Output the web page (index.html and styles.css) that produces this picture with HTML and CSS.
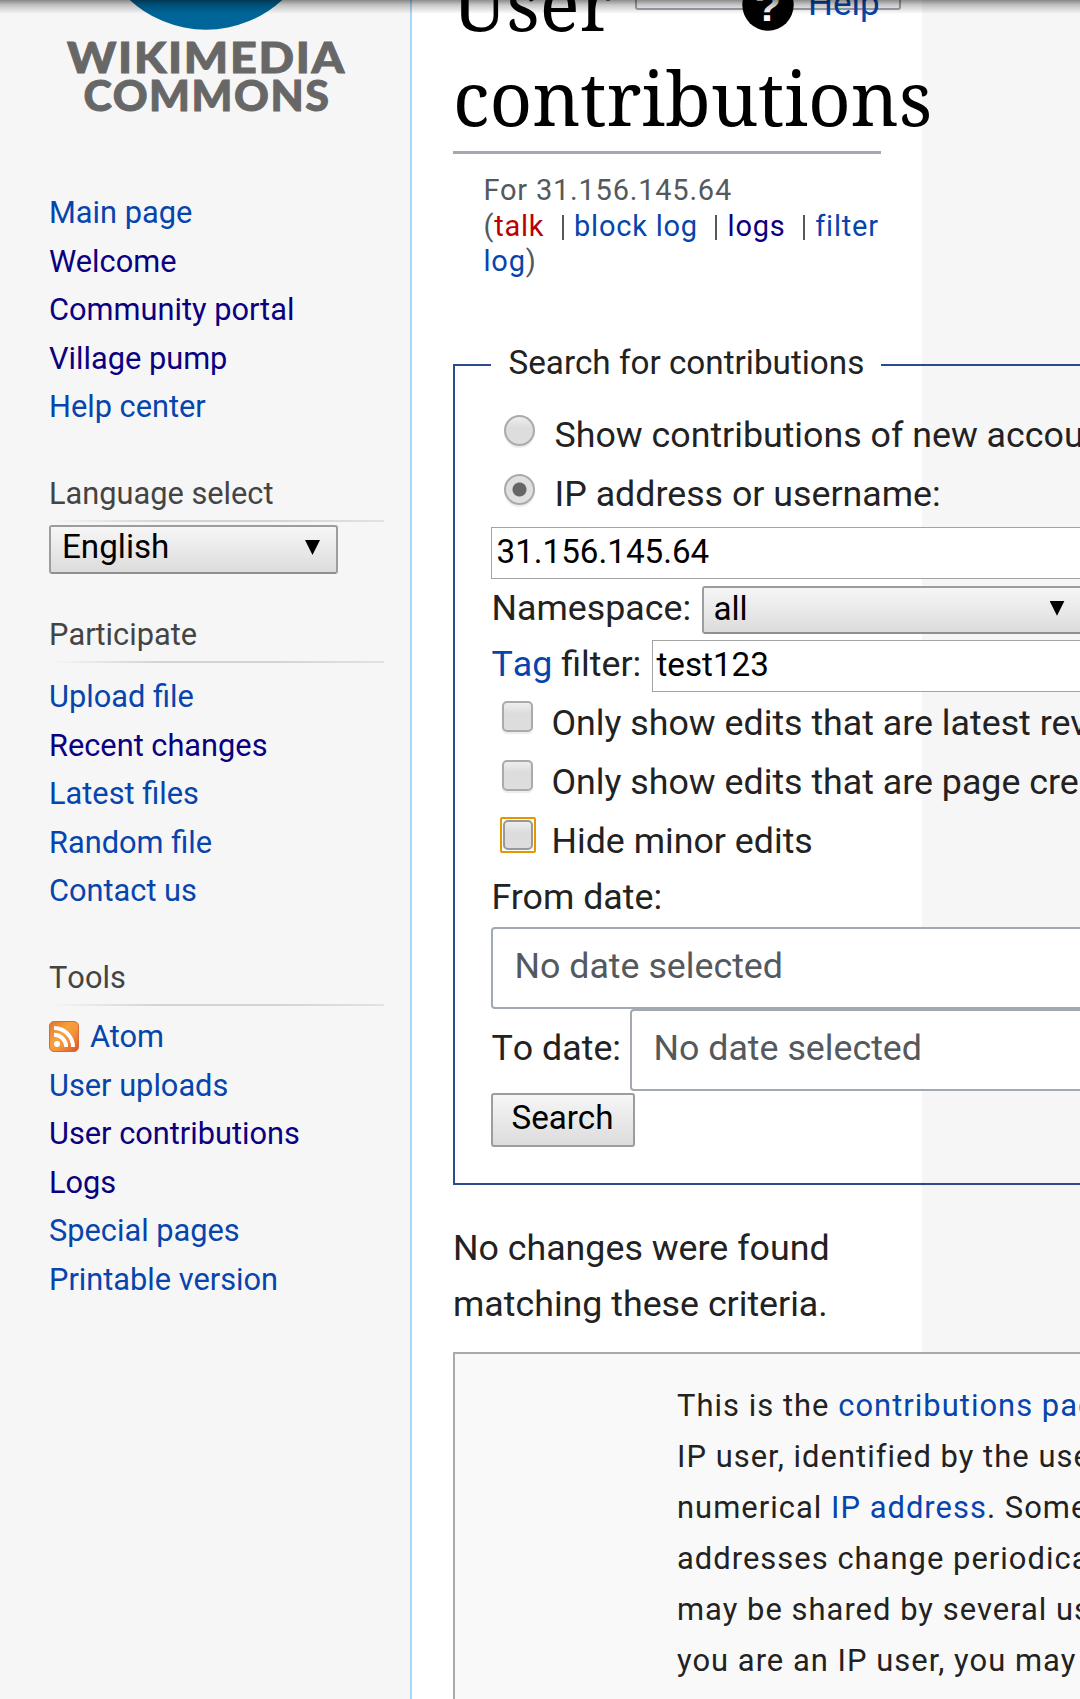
FILE: index.html
```html
<!DOCTYPE html>
<html lang="en">
<head>
<meta charset="utf-8">
<title>User contributions - Wikimedia Commons</title>
<link rel="stylesheet" href="styles.css">
</head>
<body>
<div class="page">
  <aside class="sidebar">
    <svg class="logo" viewBox="0 0 300 189" role="img" aria-label="Wikimedia Commons">
      <circle cx="157" cy="-83" r="112.7"/>
      <text x="18" y="73" textLength="279" lengthAdjust="spacingAndGlyphs">WIKIMEDIA</text>
      <text x="34.500" y="110.700" textLength="247" lengthAdjust="spacingAndGlyphs">COMMONS</text>
    </svg>
    <ul class="nav">
      <li><a href="#">Main page</a></li>
      <li><a href="#" class="visited">Welcome</a></li>
      <li><a href="#" class="visited">Community portal</a></li>
      <li><a href="#" class="visited">Village pump</a></li>
      <li><a href="#">Help center</a></li>
    </ul>
    <h3>Language select</h3>
    <div class="select language"><span>English</span><i class="arrow"></i></div>
    <h3 class="participate">Participate</h3>
    <ul class="nav spaced">
      <li><a href="#">Upload file</a></li>
      <li><a href="#" class="visited">Recent changes</a></li>
      <li><a href="#">Latest files</a></li>
      <li><a href="#">Random file</a></li>
      <li><a href="#">Contact us</a></li>
    </ul>
    <h3>Tools</h3>
    <ul class="nav tools">
      <li class="feed">
        <svg viewBox="0 0 30 31">
          <defs><linearGradient id="rss" x1="0" y1="0" x2="1" y2="1"><stop offset="0" stop-color="#e3702d"/><stop offset=".4" stop-color="#f9a03c"/><stop offset=".6" stop-color="#f39539"/><stop offset="1" stop-color="#d9512a"/></linearGradient></defs>
          <rect x=".5" y=".5" width="29" height="30" rx="4.500" fill="url(#rss)" stroke="#d96a35"/>
          <circle cx="8" cy="23" r="3" fill="#fff"/>
          <path d="M5 13.800A12.200 12.200 0 0 1 17.200 26M5 7A19 19 0 0 1 24 26" fill="none" stroke="#fff" stroke-width="4"/>
        </svg>
        <a href="#">Atom</a>
      </li>
      <li><a href="#">User uploads</a></li>
      <li><a href="#" class="visited">User contributions</a></li>
      <li><a href="#" class="visited">Logs</a></li>
      <li><a href="#">Special pages</a></li>
      <li><a href="#">Printable version</a></li>
    </ul>
  </aside>
  <main class="content">
    <div class="indicator">
      <svg viewBox="0 0 52 52"><circle cx="26" cy="26" r="25.700"/><text x="26" y="41.500" text-anchor="middle">?</text></svg>
      <a href="#">Help</a>
    </div>
    <h1>User<br>contributions</h1>
    <div class="subtitle">For 31.156.145.64<br>(<a href="#" class="new">talk</a><i class="bar"></i><a href="#">block log</a><i class="bar"></i><a href="#" class="visited">logs</a><i class="bar"></i><a href="#">filter<br>log</a>)</div>
    <fieldset>
      <legend>Search for contributions</legend>
      <label class="option"><i class="radio"></i><span>Show contributions of new accounts only</span></label>
      <label class="option"><i class="radio on"></i><span>IP address or username:</span></label>
      <div class="field user">31.156.145.64</div>
      <div class="row"><span class="name ns">Namespace:</span><div class="select namespace"><span>all</span><i class="arrow"></i></div></div>
      <div class="row"><span class="name tag"><a href="#">Tag</a> filter:</span><div class="field">test123</div></div>
      <label class="option check"><i class="box"></i><span>Only show edits that are latest revisions</span></label>
      <label class="option check"><i class="box"></i><span>Only show edits that are page creations</span></label>
      <label class="option check"><i class="box focus"></i><span>Hide minor edits</span></label>
      <div class="from">From date:</div>
      <div class="date">No date selected</div>
      <div class="to"><span class="name">To date:</span><div class="date">No date selected</div></div>
      <div class="button">Search</div>
    </fieldset>
    <p class="empty">No changes were found<br>matching these criteria.</p>
    <div class="notice">This is the <a href="#">contributions page</a> of an<br>IP user, identified by the user's<br>numerical <a href="#">IP address</a>. Some IP<br>addresses change periodically and<br>may be shared by several users. If<br>you are an IP user, you may create</div>
  </main>
  <div class="shade"></div>
</div>
</body>
</html>
```
FILE: styles.css
```css
* { box-sizing: border-box; }
html, body { margin: 0; height: 1699px; overflow: hidden; }
body { background: #f6f6f6; color: #222; font-family: Roboto, sans-serif; font-size: 35.750px; }
a { color: #0645ad; text-decoration: none; }
a.visited { color: #0b0080; }
a.new { color: #ba0000; }
.page { position: relative; display: flex; height: 1699px; overflow: hidden; }

.sidebar { flex: none; width: 412px; padding-left: 49px; border-right: 2px solid #a7d7f9; }
.logo { display: block; width: 300px; height: 189px; }
.logo circle { fill: #069; }
.logo text { font: 900 41.500px Lato, sans-serif; letter-spacing: 1.500px; fill: #676767; stroke: #676767; stroke-width: .9px; }
.nav { margin: 0; padding: 0; list-style: none; font-size: 30.750px; line-height: 48.600px; }
.nav.spaced { margin-top: 10px; }
.nav.tools { margin-top: 7px; }
.nav li { height: 48.600px; white-space: nowrap; }
.feed { display: flex; align-items: center; gap: 11px; }
.feed svg { width: 30px; height: 31px; margin-top: -2px; }
h3 { width: 335px; height: 50px; margin: 40px 0 0; font-size: 30.750px; font-weight: 400; font-kerning: none; line-height: 44px; color: #444; background: linear-gradient(to right, #f6f6f6, #d3d3d3 33%, #d3d3d3 66%, #e2e2e2) left bottom / 100% 2px no-repeat; }
h3.participate { margin-top: 39px; }

.select { display: flex; justify-content: space-between; height: 48px; border: 2px solid #9d9d9d; border-bottom-color: #8f8f8f; border-radius: 3px; background: linear-gradient(#f6f6f6, #dcdcdc); color: #000; font-size: 33.200px; line-height: 41px; }
.arrow { width: 15px; height: 15px; margin-top: 13px; background: #000; clip-path: polygon(0 0, 100% 0, 50% 100%); }
.language { width: 289px; height: 49px; margin-top: 3px; padding: 0 16px 0 11px; line-height: 39px; }
.namespace { flex: none; width: 381px; margin: 6px 0 0; padding: 0 16px 0 10px; }

.content { flex: none; position: relative; width: 510px; padding-left: 41px; background: #fff; }
h1 { width: 428px; height: 199px; margin: -45px 0 0; border-bottom: 3px solid #a2a9b1; color: #000; font: 400 74.300px/95px "Noto Serif", "DejaVu Serif Condensed", "DejaVu Serif", serif; }
.indicator { position: absolute; left: 223px; top: -50px; display: flex; width: 266px; height: 60px; border: 2px solid #a2a9b1; border-radius: 3px; }
.indicator svg { flex: none; width: 52px; height: 52px; margin: 27px 14px 0 105px; }
.indicator svg text { font: 700 43px "Liberation Sans", sans-serif; fill: #fff; }
.indicator a { margin-top: 33px; font-size: 35px; line-height: 37px; }
.subtitle { margin: 19px 0 0 30.500px; width: 420px; color: #54595d; font-size: 29px; line-height: 35.500px; letter-spacing: .78px; white-space: nowrap; }
.bar { display: inline-block; width: 2px; height: 25px; margin: 0 10.200px 0 17.500px; background: #54595d; vertical-align: -4px; }

fieldset { width: 700px; margin: 62.700px 0 0; padding: 18.500px 0 36px 35.500px; border: 2.500px solid #2a4b8d; }
legend { padding: 1px 17px 4px 18px; font-size: 33.250px; line-height: 40px; }
.option { display: flex; height: 59px; line-height: 59px; white-space: nowrap; }
.radio, .box { flex: none; width: 31px; height: 31px; margin: 9px 20px 0 13px; border: 2px solid #aaa; background: linear-gradient(#eee, #dcdcdc 40%, #dedede); box-shadow: 0 2px 1px #ececec; }
.radio { border-radius: 50%; }
.radio.on { background: radial-gradient(circle, #666 6.500px, #e0e0e0 7.500px); }
.check { line-height: 62px; }
.box { margin: 9px 19px 0 11px; border-radius: 5px; }
.focus { position: relative; width: 30px; height: 30px; margin: 10px 19px 0 12px; border-color: #999; box-shadow: none; }
.focus::after { content: ""; position: absolute; inset: -5px; border: 2px solid #e59700; border-radius: 2px; }
.field { flex: 1; height: 52px; padding-left: 5px; border: 1px solid #a3a3a3; background: #fff; color: #000; font-size: 33.200px; line-height: 48px; }
.user { margin: 3px 0 1px; }
.row { display: flex; height: 56px; }
.row .field { margin-top: 4px; padding-left: 4px; }
.name { flex: none; line-height: 56px; padding-left: 1px; font-kerning: none; }
.ns { width: 211px; }
.tag { width: 161px; }
.from { padding-left: 1px; line-height: 56px; height: 58px; }
.date { flex: 1; height: 82px; padding-left: 22px; border: 2.500px solid #a2a9b1; border-radius: 4px; background: #fff; color: #54595d; line-height: 74px; }
.to { display: flex; }
.to .name { width: 139px; line-height: 78px; }
.button { width: 144px; height: 54px; margin-top: 2px; border: 2px solid #9d9d9d; border-radius: 3px; background: linear-gradient(#f6f6f6, #dcdcdc); color: #000; font-size: 33.200px; line-height: 45px; text-align: center; }
.empty { margin: 35px 0 20px; line-height: 56px; white-space: nowrap; }
.notice { width: 760px; height: 400px; padding: 26px 0 0 222px; border: 2px solid #aaa; background: #f9f9f9; font-size: 30.900px; line-height: 51.100px; letter-spacing: 1.030px; white-space: nowrap; }
.shade { position: absolute; inset: 0 0 auto; height: 14px; background: linear-gradient(rgba(0,0,0,.45), rgba(0,0,0,.22) 35%, transparent); }
```
